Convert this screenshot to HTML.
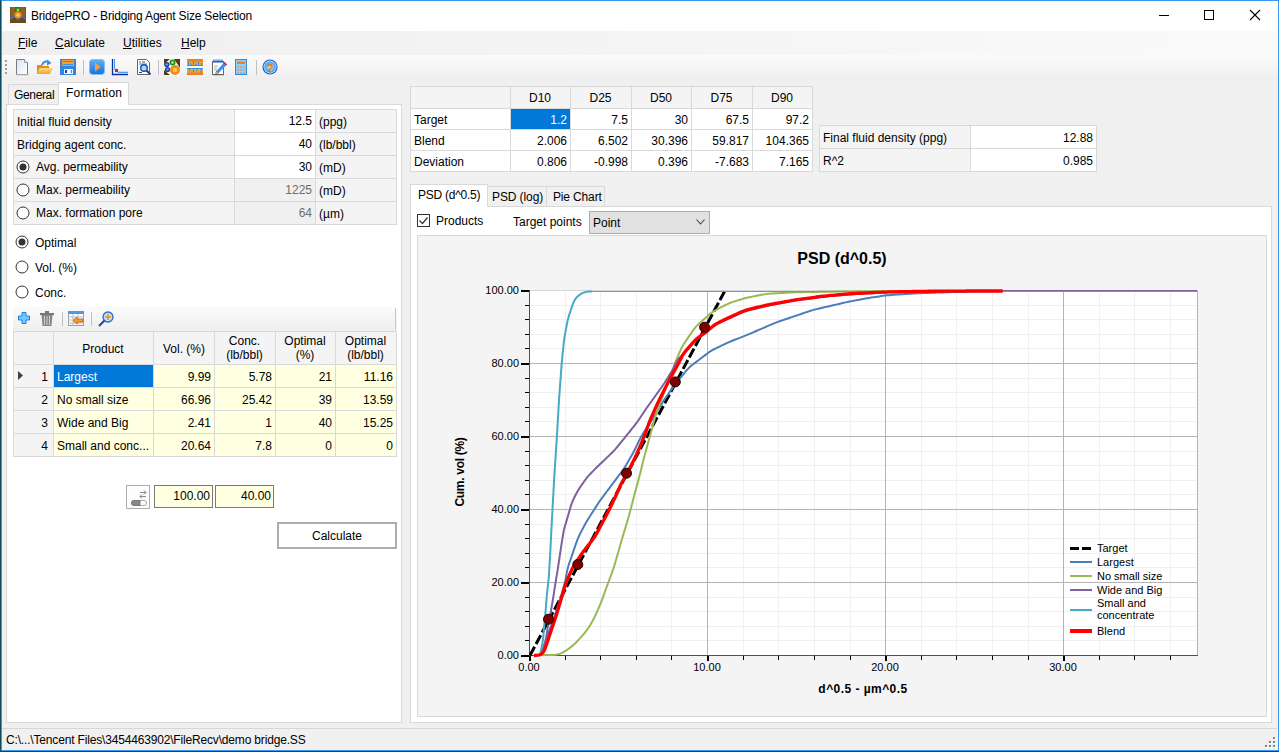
<!DOCTYPE html>
<html><head><meta charset="utf-8">
<style>
*{box-sizing:border-box}
html,body{margin:0;padding:0}
body{width:1279px;height:752px;position:relative;overflow:hidden;background:#f0f0f0;font-family:"Liberation Sans",sans-serif;font-size:12px;color:#000}
.a{position:absolute}
.t{position:absolute;white-space:nowrap;line-height:14px}
u{text-decoration:underline;text-underline-offset:1px}
svg{position:absolute;overflow:visible}
</style></head><body>

<div class="a" style="left:0px;top:0px;width:1279px;height:1px;background:#3d97ee;"></div>
<div class="a" style="left:0px;top:0px;width:1px;height:752px;background:#0c4d5c;"></div>
<div class="a" style="left:1px;top:0px;width:1px;height:751px;background:#3d97ee;"></div>
<div class="a" style="left:1278px;top:0px;width:1px;height:751px;background:#3d97ee;"></div>
<div class="a" style="left:1px;top:750px;width:1278px;height:1px;background:#3d97ee;"></div>
<div class="a" style="left:0px;top:751px;width:1279px;height:1px;background:#0c4d5c;"></div>
<div class="a" style="left:2px;top:1px;width:1276px;height:30px;background:#fff;"></div>
<svg style="left:10px;top:7px" width="16" height="16" viewBox="0 0 16 16">
<rect x="0" y="0" width="16" height="16" fill="#7a5218"/>
<rect x="1" y="0" width="4" height="12" fill="#8d6225"/>
<rect x="11" y="0" width="4" height="12" fill="#8d6225"/>
<path d="M0 11 L5 8 L8 12 L11 8 L16 11 L16 15 L0 15Z" fill="#3d6fd0"/>
<path d="M0 13 L5 10 L8 14 L11 10 L16 13 L16 16 L0 16Z" fill="#6b4a16"/>
<circle cx="8" cy="3" r="2.3" fill="#2e9a3a"/><circle cx="8" cy="3" r="1" fill="#d6e83a"/>
<circle cx="8" cy="8" r="3.6" fill="#f08a1c"/><circle cx="8" cy="8" r="1.8" fill="#ffd040"/>
</svg>
<div class="t" style="left:31px;top:9px;letter-spacing:-0.19px">BridgePRO - Bridging Agent Size Selection</div>
<div class="a" style="left:1159px;top:15px;width:10px;height:1px;background:#000;"></div>
<div class="a" style="left:1204px;top:10px;width:10px;height:10px;border:1px solid #000;"></div>
<svg style="left:1250px;top:10px" width="10" height="10"><path d="M0 0L10 10M10 0L0 10" stroke="#000" stroke-width="1.1"/></svg>
<div class="a" style="left:2px;top:31px;width:1276px;height:24px;background:linear-gradient(to right,#efefef,#fafafa);"></div>
<div class="a" style="left:2px;top:55px;width:1276px;height:25px;background:linear-gradient(#fbfbfb,#eeeeee);"></div>
<div class="t" style="left:18px;top:36px;"><u>F</u>ile</div>
<div class="t" style="left:55px;top:36px;"><u>C</u>alculate</div>
<div class="t" style="left:123px;top:36px;"><u>U</u>tilities</div>
<div class="t" style="left:181px;top:36px;"><u>H</u>elp</div>
<div class="a" style="left:5px;top:60px;width:2px;height:2px;background:#a0a0a0;"></div>
<div class="a" style="left:5px;top:64px;width:2px;height:2px;background:#a0a0a0;"></div>
<div class="a" style="left:5px;top:68px;width:2px;height:2px;background:#a0a0a0;"></div>
<div class="a" style="left:5px;top:72px;width:2px;height:2px;background:#a0a0a0;"></div>
<svg style="left:15px;top:59px" width="14" height="17" viewBox="0 0 14 17">
<defs><linearGradient id="gdoc" x1="0" y1="0" x2="1" y2="1"><stop offset="0" stop-color="#d4e6fa"/><stop offset="1" stop-color="#ffffff"/></linearGradient></defs>
<path d="M1.5 0.5H9.5L12.5 3.5V15.5H1.5Z" fill="url(#gdoc)" stroke="#7a7a7a"/>
<path d="M9.5 0.5V3.5H12.5" fill="#fff" stroke="#9a9a9a"/><path d="M1 16H14" stroke="#d0d0d0"/></svg>
<svg style="left:37px;top:59px" width="16" height="16" viewBox="0 0 16 16">
<defs><linearGradient id="gfo" x1="0" y1="0" x2="0" y2="1"><stop offset="0" stop-color="#ffe080"/><stop offset="1" stop-color="#f0a030"/></linearGradient></defs>
<path d="M0 6H5L6 7H12V15H0Z" fill="#e08a20"/>
<path d="M2.5 9H16L13 15H0Z" fill="url(#gfo)"/>
<path d="M5 6 Q7 1 12 3" stroke="#3a8fe0" stroke-width="2" fill="none"/><path d="M10 0.5L14.5 4L10 6.5Z" fill="#3a8fe0"/></svg>
<svg style="left:60px;top:59px" width="16" height="16" viewBox="0 0 16 16">
<rect x="0" y="0" width="16" height="16" fill="#2f86e0"/>
<rect x="2" y="1" width="12" height="6" fill="#f5a030"/><rect x="3" y="2" width="10" height="1" fill="#3a90e8"/><rect x="3" y="5" width="10" height="1" fill="#3a90e8"/>
<rect x="4" y="10" width="9" height="5" fill="#f0f4fc"/><rect x="5" y="11" width="2" height="3" fill="#2040a0"/><rect x="11" y="11" width="1" height="3" fill="#2f86e0"/></svg>
<div class="a" style="left:83px;top:60px;width:1px;height:15px;background:#c0c0c0;"></div>
<svg style="left:89px;top:59px" width="16" height="16" viewBox="0 0 16 16">
<defs><linearGradient id="gpl" x1="0" y1="0" x2="0" y2="1"><stop offset="0" stop-color="#60b0f8"/><stop offset="1" stop-color="#1a70d8"/></linearGradient></defs>
<rect x="0.5" y="0.5" width="15" height="15" rx="3" fill="url(#gpl)" stroke="#80c0f8"/>
<path d="M6 3.5L11.5 8L6 12.5Z" fill="#f7a030"/></svg>
<svg style="left:112px;top:59px" width="17" height="16" viewBox="0 0 17 16">
<path d="M0.5 0V15.5H16" stroke="#0a30a0" stroke-width="1.3" fill="none"/>
<path d="M2.5 0V8 Q2.5 13 8 13.4H16" stroke="#40a0f8" stroke-width="1.1" fill="none"/>
<rect x="3" y="10" width="3" height="3" fill="#d82010"/></svg>
<svg style="left:137px;top:59px" width="15" height="17" viewBox="0 0 15 17">
<path d="M0.5 0.5H9.5L12.5 3.5V15.5H0.5Z" fill="#fff" stroke="#666"/>
<rect x="2" y="2.5" width="2" height="1" fill="#d03030"/><rect x="5" y="2.5" width="3" height="1" fill="#1a40b0"/>
<rect x="2" y="4.5" width="8" height="1" fill="#3a8ee6"/><rect x="2" y="13" width="3" height="1" fill="#1a40b0"/>
<circle cx="7" cy="9" r="3.3" fill="#a8dcfc" stroke="#1a48b0" stroke-width="1.4"/><path d="M9.5 11.5L13.5 15.5" stroke="#1a3a98" stroke-width="1.8"/></svg>
<div class="a" style="left:158px;top:60px;width:1px;height:15px;background:#c0c0c0;"></div>
<svg style="left:164px;top:59px" width="16" height="16" viewBox="0 0 16 16">
<rect width="16" height="16" fill="#fafafa"/>
<path d="M0 0H6L0 5Z M16 0H10L16 9Z M0 16V11L6 16Z" fill="#5a3a10"/>
<circle cx="8.5" cy="3.5" r="3" fill="#1e9030"/><circle cx="8.5" cy="3.5" r="1.2" fill="#e0f040"/>
<circle cx="2.8" cy="5.5" r="2.6" fill="#1a40a0"/><circle cx="2.8" cy="5.5" r="1.2" fill="#60a0e0"/>
<circle cx="3.5" cy="10.5" r="2.6" fill="#1a40a0"/><circle cx="3.5" cy="10.5" r="1.2" fill="#60a0e0"/>
<circle cx="11" cy="11" r="5" fill="#f58a20"/><circle cx="11" cy="11" r="2.2" fill="#ffd040"/></svg>
<svg style="left:187px;top:59px" width="16" height="16" viewBox="0 0 16 16">
<defs><linearGradient id="gru" x1="0" y1="0" x2="0" y2="1"><stop offset="0" stop-color="#e87818"/><stop offset="0.5" stop-color="#ffd050"/><stop offset="1" stop-color="#e87818"/></linearGradient></defs>
<rect width="16" height="16" fill="url(#gru)"/><rect y="7" width="16" height="2" fill="#fff8e0"/>
<path d="M0 6.5H16M0 9.5H16" stroke="#2a90f0" stroke-width="1"/>
<path d="M1.5 3V6M4 4.5V6M6.5 2V6M9 4.5V6M11.5 3V6M14.5 4V6 M2.5 10V12M6.5 10V13.5M10 10V12M14 10V13.5" stroke="#2a90f0" stroke-width="1.2"/></svg>
<svg style="left:211px;top:59px" width="17" height="17" viewBox="0 0 17 17">
<rect x="1.5" y="2.5" width="11" height="13" fill="#fff" stroke="#666"/><path d="M2 16.5H13" stroke="#ccc"/>
<path d="M3 0.5V4M5 0.5V4M7 0.5V4M9 0.5V4M11 0.5V4" stroke="#1a60d0" stroke-width="1.1"/>
<path d="M3 7H7M3 9H6M3 11H6" stroke="#b0b0b0"/>
<path d="M13.5 3L16 5.5L7.5 14L4.5 15L5.5 12Z" fill="#3a90f0"/><path d="M13.5 3L16 5.5L15 6.5L12.5 4Z" fill="#e02020"/><path d="M5.5 12L7.5 14L4.5 15Z" fill="#f0d090" stroke="#805010" stroke-width="0.5"/></svg>
<svg style="left:235px;top:59px" width="12" height="16" viewBox="0 0 12 16">
<rect x="0" y="0" width="12" height="16" fill="#2a88f0"/><rect x="1" y="1" width="10" height="14" fill="#90d0fa"/>
<rect x="2" y="2.5" width="8" height="2.5" fill="#f28020"/>
<path d="M2 8h2M5 8h2M8 8h2M2 11h2M5 11h2M8 11h2M2 14h2M5 14h2M8 14h2" stroke="#f28a20" stroke-width="1.2"/></svg>
<div class="a" style="left:256px;top:60px;width:1px;height:15px;background:#c0c0c0;"></div>
<svg style="left:262px;top:59px" width="16" height="16" viewBox="0 0 16 16">
<defs><radialGradient id="ghl" cx="0.5" cy="0.5" r="0.5"><stop offset="0" stop-color="#d8f0ff"/><stop offset="1" stop-color="#3a9af0"/></radialGradient></defs>
<circle cx="8" cy="8" r="7.6" fill="#1a58c8"/><circle cx="8" cy="8" r="6.5" fill="#bfe4fc"/><circle cx="8" cy="8" r="5.6" fill="url(#ghl)"/>
<text x="8" y="12.8" font-family="Liberation Sans" font-weight="bold" font-size="11" fill="#f8a020" stroke="#e04000" stroke-width="0.3" text-anchor="middle">?</text></svg>
<div class="a" style="left:6px;top:104px;width:396px;height:619px;background:#fff;border:1px solid #d9d9d9;"></div>
<div class="a" style="left:8px;top:84px;width:51px;height:21px;background:#f0f0f0;border:1px solid #d9d9d9;"></div>
<div class="a" style="left:58px;top:82px;width:71px;height:23px;background:#fff;border:1px solid #d9d9d9;border-bottom:none"></div>
<div class="t" style="left:14px;top:88px;letter-spacing:-0.35px">General</div>
<div class="t" style="left:66px;top:86px;letter-spacing:0.25px">Formation</div>
<div class="a" style="left:13px;top:109px;width:384px;height:116px;background:#f4f4f4;border:1px solid #d9d9d9;"></div>
<div class="a" style="left:234px;top:109px;width:82px;height:24px;background:#fff;border:1px solid #d9d9d9;"></div>
<div class="a" style="left:13px;top:109px;width:384px;height:1px;background:#d9d9d9;"></div>
<div class="a" style="left:234px;top:132px;width:82px;height:24px;background:#fff;border:1px solid #d9d9d9;"></div>
<div class="a" style="left:13px;top:132px;width:384px;height:1px;background:#d9d9d9;"></div>
<div class="a" style="left:234px;top:155px;width:82px;height:24px;background:#fff;border:1px solid #d9d9d9;"></div>
<div class="a" style="left:13px;top:155px;width:384px;height:1px;background:#d9d9d9;"></div>
<div class="a" style="left:234px;top:178px;width:82px;height:24px;background:#f0f0f0;border:1px solid #d9d9d9;"></div>
<div class="a" style="left:13px;top:178px;width:384px;height:1px;background:#d9d9d9;"></div>
<div class="a" style="left:234px;top:201px;width:82px;height:24px;background:#f0f0f0;border:1px solid #d9d9d9;"></div>
<div class="a" style="left:13px;top:201px;width:384px;height:1px;background:#d9d9d9;"></div>
<div class="a" style="left:315px;top:109px;width:1px;height:116px;background:#d9d9d9;"></div>
<div class="t" style="left:17px;top:115px;">Initial fluid density</div>
<div class="t" style="right:967px;top:114px;color:#000">12.5</div>
<div class="t" style="left:319px;top:115px;">(ppg)</div>
<div class="t" style="left:17px;top:138px;">Bridging agent conc.</div>
<div class="t" style="right:967px;top:137px;color:#000">40</div>
<div class="t" style="left:319px;top:138px;">(lb/bbl)</div>
<svg style="left:16px;top:159.5px" width="14" height="14"><circle cx="7" cy="7" r="6" fill="#fff" stroke="#333" stroke-width="1"/><circle cx="7" cy="7" r="3.5" fill="#333"/></svg>
<div class="t" style="left:36px;top:160px;">Avg. permeability</div>
<div class="t" style="right:967px;top:160px;color:#000">30</div>
<div class="t" style="left:319px;top:161px;">(mD)</div>
<svg style="left:16px;top:182.5px" width="14" height="14"><circle cx="7" cy="7" r="6" fill="#fff" stroke="#333" stroke-width="1"/></svg>
<div class="t" style="left:36px;top:183px;">Max. permeability</div>
<div class="t" style="right:967px;top:183px;color:#6d6d6d">1225</div>
<div class="t" style="left:319px;top:184px;">(mD)</div>
<svg style="left:16px;top:205.5px" width="14" height="14"><circle cx="7" cy="7" r="6" fill="#fff" stroke="#333" stroke-width="1"/></svg>
<div class="t" style="left:36px;top:206px;">Max. formation pore</div>
<div class="t" style="right:967px;top:206px;color:#6d6d6d">64</div>
<div class="t" style="left:319px;top:207px;">(&micro;m)</div>
<svg style="left:15px;top:235.0px" width="14" height="14"><circle cx="7" cy="7" r="6" fill="#fff" stroke="#333" stroke-width="1"/><circle cx="7" cy="7" r="3.5" fill="#333"/></svg>
<div class="t" style="left:35px;top:236px;">Optimal</div>
<svg style="left:15px;top:260.0px" width="14" height="14"><circle cx="7" cy="7" r="6" fill="#fff" stroke="#333" stroke-width="1"/></svg>
<div class="t" style="left:35px;top:261px;">Vol. (%)</div>
<svg style="left:15px;top:285.0px" width="14" height="14"><circle cx="7" cy="7" r="6" fill="#fff" stroke="#333" stroke-width="1"/></svg>
<div class="t" style="left:35px;top:286px;">Conc.</div>
<div class="a" style="left:13px;top:306px;width:384px;height:25px;background:linear-gradient(#fbfbfb,#efefef);border-radius:3px 0 0 0"></div>
<div class="a" style="left:395px;top:308px;width:1px;height:22px;background:#c8c8c8;"></div>
<svg style="left:18px;top:312px" width="12" height="12" viewBox="0 0 12 12">
<path d="M4 0.5H8V4H11.5V8H8V11.5H4V8H0.5V4H4Z" fill="#70c8ff" stroke="#1a80e8" stroke-width="1"/></svg>
<svg style="left:40px;top:311px" width="14" height="15" viewBox="0 0 14 15">
<rect x="0" y="2" width="14" height="2" fill="#777"/><rect x="5" y="0" width="4" height="2" fill="#777"/>
<path d="M1.5 4H12.5L11.5 15H2.5Z" fill="#888"/><path d="M4.5 5V14M7 5V14M9.5 5V14" stroke="#ccc"/></svg>
<div class="a" style="left:62px;top:312px;width:1px;height:14px;background:#c0c0c0;"></div>
<svg style="left:68px;top:311px" width="16" height="15" viewBox="0 0 16 15">
<rect x="0.5" y="0.5" width="15" height="14" fill="#fff" stroke="#999"/>
<rect x="0" y="0" width="16" height="3" fill="#4a9ae8"/>
<path d="M0 6H16M0 9H16M0 12H16M5 3V15M10 3V15" stroke="#bbb"/>
<path d="M15 8H9V6L5 9.5L9 13V11H15Z" fill="#f0a020" stroke="#d04010" stroke-width="0.7"/></svg>
<div class="a" style="left:91px;top:312px;width:1px;height:14px;background:#c0c0c0;"></div>
<svg style="left:98px;top:311px" width="16" height="16" viewBox="0 0 16 16">
<circle cx="10" cy="6" r="5" fill="#bfe0fb" stroke="#2a6ac8" stroke-width="1.3"/>
<path d="M10 3V9M7 6H13" stroke="#f09020" stroke-width="1.6"/>
<path d="M6.5 9.5L1 15" stroke="#2a4a98" stroke-width="2.2"/></svg>
<div class="a" style="left:13px;top:331px;width:384px;height:126px;background:#fff;border:1px solid #d9d9d9;"></div>
<div class="a" style="left:14px;top:332px;width:382px;height:32px;background:#f4f4f4;"></div>
<div class="a" style="left:14px;top:364px;width:39px;height:92px;background:#f4f4f4;"></div>
<div class="a" style="left:54px;top:365px;width:342px;height:91px;background:#ffffe1;"></div>
<div class="a" style="left:53px;top:331px;width:1px;height:126px;background:#d9d9d9;"></div>
<div class="a" style="left:153px;top:331px;width:1px;height:126px;background:#d9d9d9;"></div>
<div class="a" style="left:214px;top:331px;width:1px;height:126px;background:#d9d9d9;"></div>
<div class="a" style="left:275px;top:331px;width:1px;height:126px;background:#d9d9d9;"></div>
<div class="a" style="left:335px;top:331px;width:1px;height:126px;background:#d9d9d9;"></div>
<div class="a" style="left:13px;top:364px;width:384px;height:1px;background:#d9d9d9;"></div>
<div class="a" style="left:13px;top:387px;width:384px;height:1px;background:#d9d9d9;"></div>
<div class="a" style="left:13px;top:410px;width:384px;height:1px;background:#d9d9d9;"></div>
<div class="a" style="left:13px;top:433px;width:384px;height:1px;background:#d9d9d9;"></div>
<div class="a" style="left:54px;top:365px;width:99px;height:22px;background:#0078d7;"></div>
<div class="t" style="left:3.0px;width:200px;text-align:center;top:342px;">Product</div>
<div class="t" style="left:84.0px;width:200px;text-align:center;top:342px;">Vol. (%)</div>
<div class="t" style="left:214px;width:61px;top:334px;text-align:center;line-height:14px">Conc.<br>(lb/bbl)</div>
<div class="t" style="left:275px;width:60px;top:334px;text-align:center;line-height:14px">Optimal<br>(%)</div>
<div class="t" style="left:335px;width:61px;top:334px;text-align:center;line-height:14px">Optimal<br>(lb/bbl)</div>
<svg style="left:18px;top:371px" width="5" height="9"><path d="M0 0L5 4.5L0 9Z" fill="#404040"/></svg>
<div class="t" style="right:1231px;top:370px;">1</div>
<div class="t" style="left:57px;top:370px;color:#fff">Largest</div>
<div class="t" style="right:1068px;top:370px;">9.99</div>
<div class="t" style="right:1007px;top:370px;">5.78</div>
<div class="t" style="right:947px;top:370px;">21</div>
<div class="t" style="right:886px;top:370px;">11.16</div>
<div class="t" style="right:1231px;top:393px;">2</div>
<div class="t" style="left:57px;top:393px;">No small size</div>
<div class="t" style="right:1068px;top:393px;">66.96</div>
<div class="t" style="right:1007px;top:393px;">25.42</div>
<div class="t" style="right:947px;top:393px;">39</div>
<div class="t" style="right:886px;top:393px;">13.59</div>
<div class="t" style="right:1231px;top:416px;">3</div>
<div class="t" style="left:57px;top:416px;">Wide and Big</div>
<div class="t" style="right:1068px;top:416px;">2.41</div>
<div class="t" style="right:1007px;top:416px;">1</div>
<div class="t" style="right:947px;top:416px;">40</div>
<div class="t" style="right:886px;top:416px;">15.25</div>
<div class="t" style="right:1231px;top:439px;">4</div>
<div class="t" style="left:57px;top:439px;">Small and conc...</div>
<div class="t" style="right:1068px;top:439px;">20.64</div>
<div class="t" style="right:1007px;top:439px;">7.8</div>
<div class="t" style="right:947px;top:439px;">0</div>
<div class="t" style="right:886px;top:439px;">0</div>
<div class="a" style="left:126px;top:485px;width:24px;height:24px;background:#fdfdfd;border:1px solid #adadad;"></div>
<svg style="left:126px;top:485px" width="24" height="24" viewBox="0 0 24 24">
<path d="M14 7.5H20M18 5.5L20 7.5L18 9.5M20 11.5H14M16 9.5L14 11.5L16 13.5" stroke="#888" stroke-width="1" fill="none"/>
<rect x="5.5" y="15.5" width="15" height="5" rx="2.5" fill="#fff" stroke="#aaa"/><path d="M8 15.5H14V20.5H8A2.5 2.5 0 0 1 8 15.5Z" fill="#8a8a8a" stroke="#777"/></svg>
<div class="a" style="left:154px;top:485px;width:59px;height:23px;background:#ffffe1;border:1px solid #7a7a7a;"></div>
<div class="a" style="left:215px;top:485px;width:59px;height:23px;background:#ffffe1;border:1px solid #7a7a7a;"></div>
<div class="t" style="right:1069px;top:489px;">100.00</div>
<div class="t" style="right:1008px;top:489px;">40.00</div>
<div class="a" style="left:277px;top:522px;width:120px;height:27px;background:#fff;border:2px solid #adadad;"></div>
<div class="t" style="left:237.0px;width:200px;text-align:center;top:529px;">Calculate</div>
<div class="a" style="left:410px;top:86px;width:403px;height:86px;background:#fff;border:1px solid #d9d9d9;"></div>
<div class="a" style="left:411px;top:87px;width:401px;height:21px;background:#f4f4f4;"></div>
<div class="a" style="left:510px;top:86px;width:1px;height:86px;background:#d9d9d9;"></div>
<div class="a" style="left:570px;top:86px;width:1px;height:86px;background:#d9d9d9;"></div>
<div class="a" style="left:631px;top:86px;width:1px;height:86px;background:#d9d9d9;"></div>
<div class="a" style="left:691px;top:86px;width:1px;height:86px;background:#d9d9d9;"></div>
<div class="a" style="left:752px;top:86px;width:1px;height:86px;background:#d9d9d9;"></div>
<div class="a" style="left:410px;top:108px;width:403px;height:1px;background:#d9d9d9;"></div>
<div class="a" style="left:410px;top:129px;width:403px;height:1px;background:#d9d9d9;"></div>
<div class="a" style="left:410px;top:150px;width:403px;height:1px;background:#d9d9d9;"></div>
<div class="a" style="left:511px;top:109px;width:59px;height:20px;background:#0078d7;"></div>
<div class="t" style="left:440.0px;width:200px;text-align:center;top:91px;">D10</div>
<div class="t" style="left:500.5px;width:200px;text-align:center;top:91px;">D25</div>
<div class="t" style="left:561.0px;width:200px;text-align:center;top:91px;">D50</div>
<div class="t" style="left:621.5px;width:200px;text-align:center;top:91px;">D75</div>
<div class="t" style="left:682.0px;width:200px;text-align:center;top:91px;">D90</div>
<div class="t" style="left:414px;top:113px;">Target</div>
<div class="t" style="right:712px;top:113px;color:#fff">1.2</div>
<div class="t" style="right:651px;top:113px;">7.5</div>
<div class="t" style="right:591px;top:113px;">30</div>
<div class="t" style="right:530px;top:113px;">67.5</div>
<div class="t" style="right:470px;top:113px;">97.2</div>
<div class="t" style="left:414px;top:134px;">Blend</div>
<div class="t" style="right:712px;top:134px;">2.006</div>
<div class="t" style="right:651px;top:134px;">6.502</div>
<div class="t" style="right:591px;top:134px;">30.396</div>
<div class="t" style="right:530px;top:134px;">59.817</div>
<div class="t" style="right:470px;top:134px;">104.365</div>
<div class="t" style="left:414px;top:155px;">Deviation</div>
<div class="t" style="right:712px;top:155px;">0.806</div>
<div class="t" style="right:651px;top:155px;">-0.998</div>
<div class="t" style="right:591px;top:155px;">0.396</div>
<div class="t" style="right:530px;top:155px;">-7.683</div>
<div class="t" style="right:470px;top:155px;">7.165</div>
<div class="a" style="left:819px;top:125px;width:278px;height:47px;background:#fff;border:1px solid #d9d9d9;"></div>
<div class="a" style="left:820px;top:126px;width:150px;height:45px;background:#f4f4f4;"></div>
<div class="a" style="left:970px;top:125px;width:1px;height:47px;background:#d9d9d9;"></div>
<div class="a" style="left:819px;top:148px;width:278px;height:1px;background:#d9d9d9;"></div>
<div class="t" style="left:823px;top:131px;">Final fluid density (ppg)</div>
<div class="t" style="left:823px;top:154px;">R^2</div>
<div class="t" style="right:186px;top:131px;">12.88</div>
<div class="t" style="right:186px;top:154px;">0.985</div>
<div class="a" style="left:410px;top:206px;width:862px;height:517px;background:#fff;border:1px solid #d9d9d9;"></div>
<div class="a" style="left:487px;top:186px;width:60px;height:21px;background:#f0f0f0;border:1px solid #d9d9d9;"></div>
<div class="a" style="left:546px;top:186px;width:59px;height:21px;background:#f0f0f0;border:1px solid #d9d9d9;"></div>
<div class="a" style="left:410px;top:184px;width:78px;height:23px;background:#fff;border:1px solid #d9d9d9;border-bottom:none"></div>
<div class="t" style="left:418px;top:188px;letter-spacing:-0.25px">PSD (d^0.5)</div>
<div class="t" style="left:492px;top:190px;letter-spacing:-0.1px">PSD (log)</div>
<div class="t" style="left:553px;top:190px;letter-spacing:-0.15px">Pie Chart</div>
<div class="a" style="left:417px;top:214px;width:13px;height:13px;background:#fff;border:1px solid #333;"></div>
<svg style="left:417px;top:214px" width="13" height="13"><path d="M2.5 6.5L5.5 9.5L10.5 3.5" stroke="#333" stroke-width="1.2" fill="none"/></svg>
<div class="t" style="left:436px;top:214px;">Products</div>
<div class="t" style="left:513px;top:215px;">Target points</div>
<div class="a" style="left:589px;top:211px;width:121px;height:23px;background:#e1e1e1;border:1px solid #adadad;"></div>
<div class="t" style="left:593px;top:216px;">Point</div>
<svg style="left:696px;top:219px" width="10" height="7"><path d="M0.5 0.5L4.5 5L8.5 0.5" stroke="#444" stroke-width="1.1" fill="none"/></svg>
<div class="a" style="left:417px;top:235px;width:850px;height:482px;background:#f4f4f4;border:1px solid #d9d9d9;"></div>
<div class="a" style="left:2px;top:728px;width:1275px;height:1px;background:#d7d7d7;"></div>
<div class="t" style="left:6px;top:733px;letter-spacing:-0.17px">C:\...\Tencent Files\3454463902\FileRecv\demo bridge.SS</div>
<div class="a" style="left:1274px;top:738px;width:2px;height:2px;background:#fff;"></div>
<div class="a" style="left:1273px;top:737px;width:2px;height:2px;background:#808080;"></div>
<div class="a" style="left:1270px;top:742px;width:2px;height:2px;background:#fff;"></div>
<div class="a" style="left:1269px;top:741px;width:2px;height:2px;background:#808080;"></div>
<div class="a" style="left:1274px;top:742px;width:2px;height:2px;background:#fff;"></div>
<div class="a" style="left:1273px;top:741px;width:2px;height:2px;background:#808080;"></div>
<div class="a" style="left:1266px;top:746px;width:2px;height:2px;background:#fff;"></div>
<div class="a" style="left:1265px;top:745px;width:2px;height:2px;background:#808080;"></div>
<div class="a" style="left:1270px;top:746px;width:2px;height:2px;background:#fff;"></div>
<div class="a" style="left:1269px;top:745px;width:2px;height:2px;background:#808080;"></div>
<div class="a" style="left:1274px;top:746px;width:2px;height:2px;background:#fff;"></div>
<div class="a" style="left:1273px;top:745px;width:2px;height:2px;background:#808080;"></div>
<svg style="left:0;top:0" width="1279" height="752" viewBox="0 0 1279 752">
<rect x="529" y="290" width="668" height="365" fill="#fff"/>
<path d="M565.5 290V655M600.5 290V655M636.5 290V655M671.5 290V655M743.5 290V655M778.5 290V655M814.5 290V655M850.5 290V655M921.5 290V655M956.5 290V655M992.5 290V655M1028.5 290V655M1099.5 290V655M1134.5 290V655M1170.5 290V655M529 640.5H1197M529 626.5H1197M529 611.5H1197M529 597.5H1197M529 567.5H1197M529 553.5H1197M529 538.5H1197M529 524.5H1197M529 494.5H1197M529 480.5H1197M529 465.5H1197M529 451.5H1197M529 421.5H1197M529 407.5H1197M529 392.5H1197M529 378.5H1197M529 348.5H1197M529 334.5H1197M529 319.5H1197M529 305.5H1197" stroke="#f0f0f0" stroke-width="1"/>
<path d="M707.5 290V655M885.5 290V655M1063.5 290V655M529 582.5H1197M529 509.5H1197M529 436.5H1197M529 363.5H1197" stroke="#b4b4b4" stroke-width="1"/>
<path d="M529 290.5H1197" stroke="#d8d8d8" stroke-width="1"/>
<path d="M1197.5 290V655" stroke="#b4b4b4" stroke-width="1"/>
<path d="M529.5 290V656M529 655.5H1198" stroke="#505050" stroke-width="1"/>
<path d="M525 640.5H529M525 626.5H529M525 611.5H529M525 597.5H529M525 567.5H529M525 553.5H529M525 538.5H529M525 524.5H529M525 494.5H529M525 480.5H529M525 465.5H529M525 451.5H529M525 421.5H529M525 407.5H529M525 392.5H529M525 378.5H529M525 348.5H529M525 334.5H529M525 319.5H529M525 305.5H529M565.5 656V660M600.5 656V660M636.5 656V660M671.5 656V660M743.5 656V660M778.5 656V660M814.5 656V660M850.5 656V660M921.5 656V660M956.5 656V660M992.5 656V660M1028.5 656V660M1099.5 656V660M1134.5 656V660M1170.5 656V660" stroke="#000" stroke-width="1"/>
<path d="M521 656H529M521 583H529M521 510H529M521 437H529M521 364H529M521 291H529M530 656V661M708 656V661M886 656V661M1064 656V661" stroke="#000" stroke-width="2"/>
<clipPath id="plotclip"><rect x="529" y="289.5" width="669" height="367"/></clipPath>
<path d="M529.9 655.5 L725.3 290" stroke="#000" stroke-width="3" stroke-dasharray="10 3" fill="none" clip-path="url(#plotclip)"/>
<path d="M541.00 655.00 L541.63 653.10 L542.27 651.20 L542.90 649.31 L543.53 647.41 L544.16 645.51 L544.80 643.62 L545.44 641.72 L546.09 639.83 L546.74 637.94 L547.41 636.05 L548.08 634.17 L548.76 632.29 L549.43 630.40 L550.10 628.52 L550.77 626.63 L551.45 624.75 L552.12 622.87 L552.79 620.98 L553.46 619.10 L554.14 617.22 L554.81 615.33 L555.48 613.45 L556.14 611.56 L556.80 609.67 L557.46 607.78 L558.11 605.89 L558.76 604.00 L559.41 602.11 L560.02 600.21 L560.60 598.29 L561.13 596.37 L561.64 594.43 L562.13 592.49 L562.62 590.55 L563.14 588.62 L563.68 586.70 L564.23 584.78 L564.76 582.85 L565.22 580.91 L565.63 578.96 L566.00 577.00 L566.36 575.03 L566.72 573.06 L567.10 571.10 L567.53 569.15 L568.03 567.22 L568.60 565.31 L569.23 563.41 L569.87 561.52 L570.52 559.63 L571.17 557.73 L571.82 555.84 L572.47 553.95 L573.12 552.06 L573.77 550.17 L574.42 548.27 L575.07 546.38 L575.72 544.49 L576.37 542.60 L577.05 540.72 L577.78 538.86 L578.57 537.03 L579.42 535.22 L580.30 533.43 L581.20 531.64 L582.12 529.87 L583.06 528.10 L584.02 526.34 L584.98 524.59 L585.95 522.84 L586.94 521.11 L587.96 519.39 L589.01 517.69 L590.08 516.00 L591.16 514.31 L592.25 512.63 L593.33 510.95 L594.41 509.27 L595.50 507.59 L596.58 505.91 L597.67 504.23 L598.77 502.56 L599.89 500.91 L601.05 499.27 L602.22 497.66 L603.42 496.05 L604.62 494.45 L605.82 492.85 L607.02 491.26 L608.22 489.66 L609.43 488.06 L610.63 486.46 L611.83 484.86 L613.03 483.26 L614.22 481.66 L615.42 480.05 L616.62 478.45 L617.82 476.85 L619.01 475.24 L620.21 473.64 L621.40 472.04 L622.58 470.42 L623.72 468.78 L624.81 467.11 L625.86 465.41 L626.88 463.69 L627.89 461.96 L628.90 460.24 L629.91 458.51 L630.91 456.78 L631.91 455.04 L632.88 453.30 L633.81 451.53 L634.72 449.75 L635.60 447.95 L636.47 446.15 L637.35 444.35 L638.22 442.55 L639.10 440.76 L639.99 438.97 L640.92 437.20 L641.90 435.46 L642.93 433.75 L644.01 432.07 L645.11 430.40 L646.21 428.73 L647.32 427.06 L648.42 425.40 L649.52 423.72 L650.61 422.05 L651.68 420.36 L652.72 418.65 L653.75 416.94 L654.77 415.22 L655.79 413.49 L656.80 411.77 L657.82 410.04 L658.83 408.32 L659.85 406.60 L660.88 404.89 L661.94 403.19 L663.03 401.52 L664.15 399.86 L665.30 398.22 L666.45 396.59 L667.61 394.96 L668.76 393.32 L669.92 391.69 L671.07 390.06 L672.23 388.43 L673.40 386.80 L674.58 385.19 L675.80 383.60 L677.04 382.04 L678.29 380.48 L679.56 378.93 L680.83 377.38 L682.09 375.84 L683.36 374.29 L684.63 372.74 L685.90 371.20 L687.20 369.69 L688.56 368.23 L689.99 366.86 L691.50 365.56 L693.07 364.32 L694.65 363.10 L696.24 361.89 L697.84 360.68 L699.43 359.47 L701.02 358.26 L702.61 357.05 L704.20 355.84 L705.80 354.63 L707.40 353.44 L709.02 352.28 L710.69 351.18 L712.41 350.18 L714.17 349.24 L715.96 348.35 L717.75 347.47 L719.55 346.60 L721.35 345.72 L723.15 344.85 L724.95 343.98 L726.76 343.12 L728.58 342.29 L730.41 341.50 L732.26 340.75 L734.12 340.01 L735.99 339.29 L737.85 338.56 L739.72 337.84 L741.58 337.11 L743.45 336.39 L745.31 335.66 L747.16 334.91 L749.01 334.15 L750.85 333.37 L752.69 332.58 L754.52 331.78 L756.36 330.98 L758.19 330.19 L760.03 329.39 L761.86 328.59 L763.70 327.80 L765.53 327.00 L767.37 326.20 L769.20 325.41 L771.04 324.61 L772.88 323.83 L774.73 323.07 L776.59 322.34 L778.47 321.66 L780.35 321.00 L782.25 320.35 L784.14 319.71 L786.04 319.07 L787.93 318.43 L789.83 317.78 L791.72 317.14 L793.61 316.50 L795.51 315.86 L797.40 315.22 L799.30 314.58 L801.19 313.93 L803.09 313.29 L804.98 312.65 L806.88 312.01 L808.77 311.37 L810.67 310.75 L812.58 310.16 L814.50 309.62 L816.44 309.12 L818.38 308.66 L820.33 308.20 L822.28 307.75 L824.23 307.31 L826.18 306.86 L828.13 306.41 L830.08 305.96 L832.03 305.51 L833.98 305.06 L835.93 304.61 L837.88 304.16 L839.82 303.71 L841.77 303.26 L843.72 302.82 L845.67 302.37 L847.63 301.94 L849.58 301.53 L851.55 301.14 L853.51 300.76 L855.48 300.39 L857.44 300.03 L859.41 299.66 L861.37 299.30 L863.34 298.93 L865.31 298.58 L867.28 298.23 L869.25 297.90 L871.23 297.59 L873.21 297.29 L875.18 296.99 L877.16 296.70 L879.14 296.40 L881.12 296.11 L883.10 295.82 L885.08 295.56 L887.07 295.34 L889.06 295.15 L891.05 295.00 L893.05 294.86 L895.04 294.72 L897.04 294.59 L899.03 294.46 L901.03 294.32 L903.02 294.19 L905.02 294.05 L907.02 293.92 L909.01 293.78 L911.01 293.65 L913.00 293.53 L915.00 293.42 L917.00 293.33 L919.00 293.25 L921.00 293.18 L923.00 293.10 L924.99 293.03 L926.99 292.96 L928.99 292.89 L930.99 292.82 L932.99 292.75 L934.99 292.68 L936.99 292.61 L938.99 292.54 L940.99 292.46 L942.99 292.39 L944.98 292.32 L946.98 292.24 L948.98 292.17 L950.98 292.10 L952.98 292.02 L954.98 291.95 L956.98 291.87 L958.98 291.80 L960.98 291.74 L962.97 291.68 L964.97 291.63 L966.97 291.59 L968.97 291.54 L970.97 291.50 L972.97 291.46 L974.97 291.41 L976.97 291.37 L978.97 291.33 L980.97 291.29 L982.97 291.25 L984.97 291.21 L986.97 291.19 L988.97 291.16 L990.97 291.14 L992.97 291.12 L994.97 291.10 L996.97 291.08 L998.97 291.06 L1000.97 291.04 L1002.97 291.02 L1004.97 291.01 L1006.97 291.00 L1008.97 291.00 L1010.98 291.00 L1012.98 291.00 L1014.98 291.00 L1016.98 291.00 L1018.98 291.00 L1020.98 291.00 L1022.98 291.00 L1024.98 291.00 L1026.98 291.00 L1028.98 291.00 L1030.98 291.00 L1032.98 291.00 L1034.98 291.00 L1036.98 291.00 L1038.98 291.00 L1040.98 291.00 L1042.98 291.00 L1044.98 291.00 L1046.98 291.00 L1048.98 291.00 L1050.98 291.00 L1052.98 291.00 L1054.98 291.00 L1056.98 291.00 L1058.98 291.00 L1060.98 291.00 L1062.98 291.00 L1064.98 291.00 L1066.98 291.00 L1068.98 291.00 L1070.98 291.00 L1072.98 291.00 L1074.98 291.00 L1076.98 291.00 L1078.98 291.00 L1080.98 291.00 L1082.98 291.00 L1084.98 291.00 L1086.99 291.00 L1088.99 291.00 L1090.99 291.00 L1092.99 291.00 L1094.99 291.00 L1096.99 291.00 L1098.99 291.00 L1100.99 291.00 L1102.99 291.00 L1104.99 291.00 L1106.99 291.00 L1108.99 291.00 L1110.99 291.00 L1112.99 291.00 L1114.99 291.00 L1116.99 291.00 L1118.99 291.00 L1120.99 291.00 L1122.99 291.00 L1124.99 291.00 L1126.99 291.00 L1128.99 291.00 L1130.99 291.00 L1132.99 291.00 L1134.99 291.00 L1136.99 291.00 L1138.99 291.00 L1140.99 291.00 L1142.99 291.00 L1144.99 291.00 L1146.99 291.00 L1148.99 291.00 L1150.99 291.00 L1152.99 291.00 L1154.99 291.00 L1156.99 291.00 L1158.99 291.00 L1161.00 291.00 L1163.00 291.00 L1165.00 291.00 L1167.00 291.00 L1169.00 291.00 L1171.00 291.00 L1173.00 291.00 L1175.00 291.00 L1177.00 291.00 L1179.00 291.00 L1181.00 291.00 L1183.00 291.00 L1185.00 291.00 L1187.00 291.00 L1189.00 291.00 L1191.00 291.00 L1193.00 291.00 L1195.00 291.00 L1197.00 291.00 L1197.00 291.00" stroke="#4a7ebb" stroke-width="2" fill="none" stroke-linejoin="round"/>
<path d="M541.00 655.00 L543.00 655.00 L545.00 655.00 L547.00 655.00 L549.00 654.99 L551.00 654.96 L553.00 654.89 L554.99 654.76 L556.95 654.52 L558.85 654.10 L560.70 653.45 L562.49 652.62 L564.23 651.67 L565.94 650.64 L567.59 649.53 L569.21 648.35 L570.79 647.13 L572.34 645.87 L573.85 644.57 L575.31 643.21 L576.72 641.79 L578.11 640.35 L579.48 638.90 L580.83 637.42 L582.16 635.93 L583.45 634.40 L584.71 632.85 L585.94 631.27 L587.14 629.68 L588.30 628.05 L589.40 626.39 L590.44 624.68 L591.43 622.94 L592.39 621.19 L593.34 619.43 L594.26 617.66 L595.15 615.86 L596.00 614.05 L596.82 612.23 L597.64 610.41 L598.44 608.57 L599.23 606.74 L600.00 604.89 L600.75 603.03 L601.49 601.17 L602.22 599.31 L602.92 597.44 L603.60 595.56 L604.26 593.67 L604.92 591.78 L605.58 589.89 L606.27 588.01 L606.96 586.14 L607.67 584.26 L608.37 582.39 L609.07 580.52 L609.77 578.64 L610.46 576.76 L611.16 574.89 L611.85 573.01 L612.53 571.13 L613.19 569.24 L613.82 567.34 L614.41 565.43 L614.98 563.51 L615.54 561.59 L616.09 559.67 L616.64 557.75 L617.20 555.83 L617.75 553.90 L618.30 551.98 L618.84 550.05 L619.39 548.13 L619.93 546.20 L620.47 544.28 L621.02 542.35 L621.57 540.43 L622.12 538.50 L622.69 536.59 L623.27 534.67 L623.85 532.76 L624.44 530.84 L625.02 528.93 L625.60 527.01 L626.18 525.10 L626.75 523.18 L627.31 521.26 L627.87 519.34 L628.43 517.42 L628.98 515.49 L629.53 513.57 L630.06 511.64 L630.57 509.71 L631.07 507.77 L631.57 505.83 L632.06 503.89 L632.56 501.95 L633.05 500.01 L633.55 498.08 L634.05 496.14 L634.56 494.20 L635.08 492.27 L635.60 490.34 L636.12 488.41 L636.65 486.48 L637.18 484.55 L637.70 482.62 L638.23 480.69 L638.75 478.76 L639.26 476.82 L639.76 474.88 L640.25 472.94 L640.74 471.00 L641.22 469.06 L641.70 467.12 L642.18 465.18 L642.66 463.23 L643.14 461.29 L643.63 459.35 L644.12 457.41 L644.63 455.48 L645.14 453.54 L645.67 451.61 L646.21 449.69 L646.74 447.76 L647.28 445.83 L647.81 443.90 L648.34 441.97 L648.88 440.04 L649.41 438.12 L649.94 436.19 L650.46 434.25 L650.99 432.32 L651.51 430.39 L652.03 428.46 L652.54 426.53 L653.06 424.59 L653.59 422.66 L654.13 420.74 L654.70 418.82 L655.30 416.92 L655.94 415.02 L656.60 413.13 L657.27 411.24 L657.93 409.36 L658.60 407.47 L659.27 405.58 L659.94 403.70 L660.62 401.82 L661.31 399.94 L662.03 398.07 L662.75 396.21 L663.48 394.34 L664.21 392.48 L664.94 390.62 L665.67 388.76 L666.40 386.89 L667.13 385.03 L667.85 383.16 L668.56 381.29 L669.25 379.41 L669.93 377.53 L670.60 375.65 L671.27 373.76 L671.93 371.87 L672.60 369.99 L673.27 368.10 L673.95 366.22 L674.64 364.34 L675.36 362.48 L676.11 360.62 L676.87 358.77 L677.65 356.93 L678.42 355.08 L679.20 353.24 L679.99 351.40 L680.79 349.57 L681.65 347.77 L682.60 346.02 L683.63 344.32 L684.72 342.64 L685.84 340.99 L686.96 339.33 L688.09 337.68 L689.22 336.03 L690.35 334.38 L691.48 332.72 L692.61 331.08 L693.77 329.45 L694.97 327.86 L696.25 326.34 L697.63 324.92 L699.09 323.55 L700.58 322.22 L702.08 320.90 L703.58 319.58 L705.09 318.26 L706.59 316.94 L708.10 315.63 L709.62 314.32 L711.16 313.06 L712.76 311.88 L714.43 310.81 L716.16 309.82 L717.92 308.88 L719.70 307.97 L721.48 307.05 L723.26 306.14 L725.05 305.24 L726.84 304.37 L728.66 303.55 L730.52 302.81 L732.40 302.15 L734.30 301.52 L736.20 300.91 L738.11 300.30 L740.02 299.69 L741.93 299.10 L743.85 298.55 L745.78 298.04 L747.72 297.59 L749.68 297.17 L751.64 296.77 L753.60 296.38 L755.56 295.99 L757.53 295.59 L759.49 295.20 L761.45 294.82 L763.42 294.45 L765.39 294.13 L767.37 293.87 L769.36 293.69 L771.35 293.55 L773.35 293.44 L775.34 293.33 L777.34 293.22 L779.34 293.12 L781.34 293.01 L783.34 292.90 L785.34 292.80 L787.33 292.69 L789.33 292.59 L791.33 292.49 L793.33 292.39 L795.33 292.32 L797.33 292.26 L799.33 292.22 L801.33 292.18 L803.33 292.14 L805.33 292.11 L807.33 292.07 L809.33 292.03 L811.33 292.00 L813.33 291.96 L815.33 291.92 L817.33 291.89 L819.33 291.85 L821.33 291.81 L823.33 291.78 L825.34 291.74 L827.34 291.71 L829.34 291.68 L831.34 291.65 L833.34 291.63 L835.34 291.60 L837.34 291.58 L839.34 291.55 L841.34 291.53 L843.34 291.51 L845.34 291.48 L847.34 291.46 L849.34 291.43 L851.35 291.41 L853.35 291.38 L855.35 291.36 L857.35 291.33 L859.35 291.31 L861.35 291.28 L863.35 291.25 L865.35 291.22 L867.35 291.19 L869.35 291.16 L871.35 291.13 L873.35 291.10 L875.35 291.07 L877.35 291.04 L879.36 291.02 L881.36 291.01 L883.36 291.00 L885.36 291.00 L887.36 291.00 L889.36 291.00 L891.36 291.00 L893.36 291.00 L895.36 291.00 L897.36 291.00 L899.36 291.00 L901.36 291.00 L903.37 291.00 L905.37 291.00 L907.37 291.00 L909.37 291.00 L911.37 291.00 L913.37 291.00 L915.37 291.00 L917.37 291.00 L919.37 291.00 L921.37 291.00 L923.38 291.00 L925.38 291.00 L927.38 291.00 L929.38 291.00 L931.38 291.00 L933.38 291.00 L935.38 291.00 L937.38 291.00 L939.38 291.00 L941.38 291.00 L943.38 291.00 L945.39 291.00 L947.39 291.00 L949.39 291.00 L951.39 291.00 L953.39 291.00 L955.39 291.00 L957.39 291.00 L959.39 291.00 L961.39 291.00 L963.39 291.00 L965.39 291.00 L967.40 291.00 L969.40 291.00 L971.40 291.00 L973.40 291.00 L975.40 291.00 L977.40 291.00 L979.40 291.00 L981.40 291.00 L983.40 291.00 L985.40 291.00 L987.40 291.00 L989.41 291.00 L991.41 291.00 L993.41 291.00 L995.41 291.00 L997.41 291.00 L999.41 291.00 L1001.41 291.00 L1003.41 291.00 L1005.41 291.00 L1007.41 291.00 L1009.41 291.00 L1011.42 291.00 L1013.42 291.00 L1015.42 291.00 L1017.42 291.00 L1019.42 291.00 L1021.42 291.00 L1023.42 291.00 L1025.42 291.00 L1027.42 291.00 L1029.42 291.00 L1031.42 291.00 L1033.43 291.00 L1035.43 291.00 L1037.43 291.00 L1039.43 291.00 L1041.43 291.00 L1043.43 291.00 L1045.43 291.00 L1047.43 291.00 L1049.43 291.00 L1051.43 291.00 L1053.43 291.00 L1055.44 291.00 L1057.44 291.00 L1059.44 291.00 L1061.44 291.00 L1063.44 291.00 L1065.44 291.00 L1067.44 291.00 L1069.44 291.00 L1071.44 291.00 L1073.44 291.00 L1075.44 291.00 L1077.45 291.00 L1079.45 291.00 L1081.45 291.00 L1083.45 291.00 L1085.45 291.00 L1087.45 291.00 L1089.45 291.00 L1091.45 291.00 L1093.45 291.00 L1095.45 291.00 L1097.45 291.00 L1099.46 291.00 L1101.46 291.00 L1103.46 291.00 L1105.46 291.00 L1107.46 291.00 L1109.46 291.00 L1111.46 291.00 L1113.46 291.00 L1115.46 291.00 L1117.46 291.00 L1119.46 291.00 L1121.47 291.00 L1123.47 291.00 L1125.47 291.00 L1127.47 291.00 L1129.47 291.00 L1131.47 291.00 L1133.47 291.00 L1135.47 291.00 L1137.47 291.00 L1139.47 291.00 L1141.47 291.00 L1143.48 291.00 L1145.48 291.00 L1147.48 291.00 L1149.48 291.00 L1151.48 291.00 L1153.48 291.00 L1155.48 291.00 L1157.48 291.00 L1159.48 291.00 L1161.48 291.00 L1163.48 291.00 L1165.49 291.00 L1167.49 291.00 L1169.49 291.00 L1171.49 291.00 L1173.49 291.00 L1175.49 291.00 L1177.49 291.00 L1179.49 291.00 L1181.49 291.00 L1183.49 291.00 L1185.49 291.00 L1187.50 291.00 L1189.50 291.00 L1191.50 291.00 L1193.50 291.00 L1195.50 291.00 L1197.00 291.00" stroke="#98b954" stroke-width="2" fill="none" stroke-linejoin="round"/>
<path d="M540.00 655.00 L540.95 653.24 L541.85 651.46 L542.64 649.64 L543.33 647.77 L543.96 645.87 L544.56 643.96 L545.12 642.04 L545.61 640.11 L546.02 638.15 L546.36 636.19 L546.67 634.21 L546.99 632.23 L547.30 630.26 L547.62 628.28 L547.95 626.31 L548.31 624.34 L548.68 622.38 L549.07 620.41 L549.46 618.45 L549.85 616.49 L550.24 614.53 L550.62 612.56 L550.98 610.59 L551.34 608.63 L551.68 606.65 L552.02 604.68 L552.35 602.71 L552.69 600.74 L553.02 598.76 L553.35 596.79 L553.66 594.81 L553.96 592.84 L554.26 590.86 L554.56 588.88 L554.86 586.90 L555.16 584.92 L555.47 582.95 L555.79 580.97 L556.12 579.00 L556.45 577.03 L556.79 575.05 L557.13 573.08 L557.46 571.11 L557.79 569.14 L558.10 567.16 L558.40 565.18 L558.69 563.20 L558.97 561.22 L559.25 559.24 L559.54 557.26 L559.82 555.28 L560.12 553.30 L560.42 551.32 L560.73 549.34 L561.04 547.37 L561.36 545.39 L561.67 543.42 L561.98 541.44 L562.30 539.46 L562.61 537.49 L562.93 535.51 L563.25 533.54 L563.60 531.57 L564.02 529.62 L564.52 527.69 L565.08 525.76 L565.65 523.85 L566.22 521.93 L566.78 520.01 L567.34 518.09 L567.90 516.17 L568.45 514.24 L569.01 512.32 L569.58 510.41 L570.15 508.49 L570.73 506.57 L571.33 504.67 L571.97 502.78 L572.70 500.92 L573.53 499.10 L574.40 497.31 L575.29 495.52 L576.20 493.74 L577.15 491.98 L578.17 490.26 L579.26 488.59 L580.38 486.93 L581.52 485.28 L582.65 483.64 L583.79 481.99 L584.94 480.35 L586.11 478.73 L587.34 477.17 L588.65 475.66 L590.02 474.20 L591.41 472.76 L592.80 471.33 L594.19 469.89 L595.59 468.47 L597.01 467.05 L598.44 465.66 L599.89 464.27 L601.34 462.90 L602.80 461.52 L604.25 460.15 L605.70 458.77 L607.15 457.39 L608.59 456.00 L610.03 454.61 L611.47 453.22 L612.89 451.81 L614.26 450.37 L615.59 448.87 L616.87 447.34 L618.14 445.79 L619.41 444.25 L620.68 442.70 L621.94 441.15 L623.21 439.60 L624.47 438.05 L625.73 436.49 L626.99 434.93 L628.24 433.37 L629.49 431.81 L630.74 430.25 L631.99 428.69 L633.24 427.12 L634.49 425.56 L635.72 423.99 L636.93 422.39 L638.09 420.77 L639.22 419.11 L640.33 417.45 L641.44 415.79 L642.55 414.12 L643.66 412.46 L644.77 410.79 L645.89 409.13 L647.01 407.48 L648.16 405.84 L649.32 404.21 L650.50 402.59 L651.67 400.97 L652.84 399.35 L654.02 397.73 L655.19 396.11 L656.36 394.49 L657.53 392.86 L658.69 391.24 L659.86 389.61 L661.02 387.98 L662.18 386.35 L663.33 384.71 L664.45 383.05 L665.53 381.37 L666.59 379.68 L667.64 377.98 L668.69 376.27 L669.74 374.57 L670.78 372.86 L671.80 371.14 L672.76 369.39 L673.66 367.60 L674.50 365.79 L675.33 363.98 L676.21 362.20 L677.23 360.51 L678.43 358.96 L679.80 357.52 L681.22 356.13 L682.64 354.73 L684.03 353.28 L685.37 351.80 L686.70 350.31 L688.03 348.81 L689.35 347.31 L690.67 345.81 L692.00 344.31 L693.33 342.82 L694.70 341.37 L696.14 340.00 L697.68 338.74 L699.28 337.55 L700.91 336.39 L702.54 335.23 L704.17 334.06 L705.77 332.86 L707.33 331.62 L708.86 330.34 L710.38 329.03 L711.89 327.73 L713.44 326.46 L715.04 325.30 L716.75 324.29 L718.52 323.38 L720.33 322.53 L722.14 321.68 L723.96 320.84 L725.77 320.00 L727.59 319.16 L729.41 318.33 L731.23 317.50 L733.05 316.68 L734.88 315.86 L736.70 315.03 L738.53 314.21 L740.35 313.40 L742.18 312.59 L744.03 311.84 L745.91 311.19 L747.83 310.63 L749.76 310.13 L751.71 309.65 L753.65 309.17 L755.59 308.69 L757.53 308.21 L759.48 307.73 L761.42 307.25 L763.36 306.78 L765.31 306.32 L767.26 305.89 L769.22 305.49 L771.19 305.10 L773.15 304.73 L775.12 304.35 L777.08 303.97 L779.05 303.60 L781.01 303.22 L782.98 302.85 L784.94 302.47 L786.91 302.09 L788.87 301.72 L790.84 301.34 L792.80 300.98 L794.78 300.64 L796.75 300.34 L798.73 300.06 L800.72 299.79 L802.70 299.52 L804.68 299.25 L806.66 298.98 L808.65 298.71 L810.63 298.45 L812.61 298.18 L814.59 297.91 L816.58 297.64 L818.56 297.38 L820.54 297.12 L822.53 296.87 L824.52 296.66 L826.51 296.46 L828.50 296.28 L830.49 296.10 L832.49 295.91 L834.48 295.73 L836.47 295.55 L838.46 295.37 L840.46 295.18 L842.45 295.00 L844.44 294.82 L846.43 294.64 L848.43 294.48 L850.42 294.34 L852.42 294.22 L854.42 294.11 L856.42 294.00 L858.41 293.90 L860.41 293.79 L862.41 293.68 L864.41 293.58 L866.41 293.47 L868.40 293.37 L870.40 293.26 L872.40 293.15 L874.40 293.05 L876.40 292.94 L878.39 292.83 L880.39 292.73 L882.39 292.62 L884.39 292.52 L886.39 292.44 L888.39 292.37 L890.39 292.32 L892.39 292.27 L894.39 292.23 L896.39 292.19 L898.39 292.15 L900.39 292.10 L902.39 292.06 L904.39 292.02 L906.39 291.98 L908.39 291.93 L910.39 291.89 L912.39 291.85 L914.39 291.80 L916.39 291.76 L918.39 291.72 L920.39 291.68 L922.39 291.64 L924.39 291.60 L926.39 291.58 L928.39 291.55 L930.40 291.53 L932.40 291.51 L934.40 291.48 L936.40 291.46 L938.40 291.44 L940.40 291.42 L942.40 291.40 L944.40 291.37 L946.40 291.35 L948.40 291.33 L950.40 291.31 L952.40 291.28 L954.40 291.26 L956.40 291.24 L958.40 291.22 L960.41 291.20 L962.41 291.18 L964.41 291.16 L966.41 291.14 L968.41 291.12 L970.41 291.10 L972.41 291.08 L974.41 291.06 L976.41 291.04 L978.41 291.02 L980.41 291.01 L982.41 291.00 L984.41 291.00 L986.41 291.00 L988.42 291.00 L990.42 291.00 L992.42 291.00 L994.42 291.00 L996.42 291.00 L998.42 291.00 L1000.42 291.00 L1002.42 291.00 L1004.42 291.00 L1006.42 291.00 L1008.42 291.00 L1010.42 291.00 L1012.43 291.00 L1014.43 291.00 L1016.43 291.00 L1018.43 291.00 L1020.43 291.00 L1022.43 291.00 L1024.43 291.00 L1026.43 291.00 L1028.43 291.00 L1030.43 291.00 L1032.43 291.00 L1034.43 291.00 L1036.44 291.00 L1038.44 291.00 L1040.44 291.00 L1042.44 291.00 L1044.44 291.00 L1046.44 291.00 L1048.44 291.00 L1050.44 291.00 L1052.44 291.00 L1054.44 291.00 L1056.44 291.00 L1058.44 291.00 L1060.44 291.00 L1062.45 291.00 L1064.45 291.00 L1066.45 291.00 L1068.45 291.00 L1070.45 291.00 L1072.45 291.00 L1074.45 291.00 L1076.45 291.00 L1078.45 291.00 L1080.45 291.00 L1082.45 291.00 L1084.45 291.00 L1086.46 291.00 L1088.46 291.00 L1090.46 291.00 L1092.46 291.00 L1094.46 291.00 L1096.46 291.00 L1098.46 291.00 L1100.46 291.00 L1102.46 291.00 L1104.46 291.00 L1106.46 291.00 L1108.46 291.00 L1110.47 291.00 L1112.47 291.00 L1114.47 291.00 L1116.47 291.00 L1118.47 291.00 L1120.47 291.00 L1122.47 291.00 L1124.47 291.00 L1126.47 291.00 L1128.47 291.00 L1130.47 291.00 L1132.47 291.00 L1134.47 291.00 L1136.48 291.00 L1138.48 291.00 L1140.48 291.00 L1142.48 291.00 L1144.48 291.00 L1146.48 291.00 L1148.48 291.00 L1150.48 291.00 L1152.48 291.00 L1154.48 291.00 L1156.48 291.00 L1158.48 291.00 L1160.49 291.00 L1162.49 291.00 L1164.49 291.00 L1166.49 291.00 L1168.49 291.00 L1170.49 291.00 L1172.49 291.00 L1174.49 291.00 L1176.49 291.00 L1178.49 291.00 L1180.49 291.00 L1182.49 291.00 L1184.49 291.00 L1186.50 291.00 L1188.50 291.00 L1190.50 291.00 L1192.50 291.00 L1194.50 291.00 L1196.50 291.00 L1197.00 291.00" stroke="#7d60a0" stroke-width="2" fill="none" stroke-linejoin="round"/>
<path d="M540.00 655.00 L540.40 653.04 L540.81 651.08 L541.21 649.12 L541.61 647.16 L542.01 645.19 L542.39 643.23 L542.73 641.26 L543.01 639.28 L543.23 637.29 L543.41 635.30 L543.58 633.31 L543.75 631.31 L543.91 629.32 L544.08 627.32 L544.26 625.33 L544.44 623.33 L544.63 621.34 L544.82 619.35 L545.01 617.36 L545.20 615.36 L545.38 613.37 L545.56 611.38 L545.73 609.38 L545.88 607.38 L546.04 605.39 L546.19 603.39 L546.34 601.40 L546.50 599.40 L546.67 597.41 L546.86 595.41 L547.06 593.42 L547.27 591.43 L547.49 589.44 L547.71 587.45 L547.93 585.46 L548.15 583.47 L548.36 581.48 L548.55 579.49 L548.72 577.50 L548.87 575.50 L549.00 573.50 L549.12 571.50 L549.24 569.51 L549.36 567.51 L549.48 565.51 L549.60 563.51 L549.72 561.51 L549.84 559.51 L549.96 557.52 L550.08 555.52 L550.20 553.52 L550.31 551.52 L550.42 549.52 L550.52 547.52 L550.62 545.52 L550.72 543.52 L550.82 541.52 L550.92 539.52 L551.02 537.52 L551.12 535.52 L551.22 533.52 L551.32 531.53 L551.42 529.53 L551.52 527.53 L551.62 525.53 L551.72 523.53 L551.83 521.53 L551.93 519.53 L552.04 517.53 L552.15 515.53 L552.26 513.53 L552.37 511.53 L552.48 509.53 L552.59 507.54 L552.70 505.54 L552.81 503.54 L552.92 501.54 L553.03 499.54 L553.14 497.54 L553.25 495.54 L553.36 493.54 L553.47 491.54 L553.58 489.55 L553.69 487.55 L553.80 485.55 L553.91 483.55 L554.02 481.55 L554.13 479.55 L554.25 477.55 L554.38 475.55 L554.50 473.56 L554.63 471.56 L554.76 469.56 L554.89 467.56 L555.02 465.57 L555.15 463.57 L555.28 461.57 L555.41 459.57 L555.54 457.57 L555.67 455.58 L555.80 453.58 L555.93 451.58 L556.06 449.58 L556.19 447.59 L556.32 445.59 L556.45 443.59 L556.58 441.59 L556.71 439.59 L556.84 437.60 L556.96 435.60 L557.08 433.60 L557.19 431.60 L557.31 429.60 L557.42 427.60 L557.53 425.61 L557.65 423.61 L557.76 421.61 L557.88 419.61 L557.99 417.61 L558.11 415.61 L558.22 413.61 L558.34 411.61 L558.45 409.62 L558.56 407.62 L558.68 405.62 L558.80 403.62 L558.92 401.62 L559.04 399.62 L559.18 397.63 L559.32 395.63 L559.47 393.63 L559.61 391.64 L559.76 389.64 L559.91 387.64 L560.05 385.65 L560.20 383.65 L560.35 381.65 L560.49 379.66 L560.64 377.66 L560.79 375.66 L560.93 373.67 L561.08 371.67 L561.23 369.67 L561.37 367.68 L561.53 365.68 L561.69 363.69 L561.87 361.69 L562.06 359.70 L562.25 357.71 L562.45 355.72 L562.65 353.72 L562.85 351.73 L563.05 349.74 L563.25 347.75 L563.45 345.76 L563.66 343.77 L563.88 341.78 L564.13 339.79 L564.42 337.81 L564.74 335.84 L565.09 333.87 L565.45 331.90 L565.80 329.93 L566.16 327.96 L566.53 325.99 L566.91 324.02 L567.32 322.07 L567.78 320.12 L568.28 318.18 L568.81 316.26 L569.38 314.34 L569.98 312.43 L570.62 310.53 L571.26 308.64 L571.92 306.75 L572.59 304.86 L573.29 303.00 L574.09 301.19 L575.06 299.49 L576.22 297.92 L577.56 296.49 L579.05 295.21 L580.67 294.09 L582.40 293.15 L584.20 292.41 L586.09 291.90 L588.03 291.62 L590.01 291.48 L592.00 291.40 L592.00 291.40" stroke="#46aac5" stroke-width="2" fill="none" stroke-linejoin="round"/>
<path d="M588 291.5H1197" stroke="#46aac5" stroke-width="1.2" fill="none"/>
<path d="M534.00 655.50 L535.98 655.40 L537.92 655.21 L539.74 654.79 L541.36 653.99 L542.72 652.78 L543.82 651.26 L544.69 649.52 L545.41 647.68 L546.06 645.79 L546.70 643.90 L547.33 642.00 L547.97 640.10 L548.60 638.21 L549.23 636.31 L549.86 634.41 L550.50 632.52 L551.14 630.62 L551.78 628.73 L552.43 626.83 L553.08 624.94 L553.73 623.05 L554.37 621.16 L555.01 619.26 L555.63 617.36 L556.23 615.45 L556.81 613.54 L557.39 611.62 L557.97 609.71 L558.55 607.80 L559.13 605.88 L559.70 603.96 L560.27 602.05 L560.83 600.13 L561.39 598.21 L561.95 596.29 L562.51 594.37 L563.08 592.45 L563.64 590.53 L564.21 588.61 L564.79 586.70 L565.40 584.79 L566.05 582.91 L566.77 581.05 L567.55 579.20 L568.35 577.37 L569.16 575.55 L569.98 573.72 L570.81 571.90 L571.65 570.09 L572.53 568.30 L573.47 566.54 L574.49 564.82 L575.55 563.13 L576.64 561.46 L577.74 559.79 L578.84 558.11 L579.95 556.45 L581.07 554.79 L582.22 553.16 L583.40 551.55 L584.61 549.96 L585.84 548.38 L587.06 546.80 L588.29 545.22 L589.52 543.64 L590.75 542.06 L591.97 540.48 L593.17 538.88 L594.32 537.25 L595.40 535.58 L596.41 533.86 L597.38 532.11 L598.33 530.35 L599.27 528.58 L600.21 526.82 L601.15 525.05 L602.09 523.29 L603.03 521.52 L603.97 519.76 L604.91 517.99 L605.85 516.23 L606.78 514.46 L607.70 512.68 L608.60 510.89 L609.48 509.10 L610.35 507.30 L611.22 505.50 L612.08 503.69 L612.95 501.89 L613.81 500.08 L614.67 498.28 L615.52 496.47 L616.35 494.65 L617.17 492.82 L617.97 490.99 L618.76 489.16 L619.57 487.32 L620.39 485.50 L621.26 483.71 L622.18 481.94 L623.15 480.19 L624.15 478.46 L625.15 476.72 L626.14 474.99 L627.11 473.24 L628.06 471.48 L628.99 469.71 L629.90 467.93 L630.81 466.15 L631.72 464.37 L632.62 462.58 L633.50 460.78 L634.36 458.98 L635.21 457.17 L636.05 455.35 L636.89 453.54 L637.72 451.72 L638.55 449.90 L639.36 448.07 L640.15 446.23 L640.93 444.39 L641.69 442.54 L642.46 440.69 L643.21 438.84 L643.95 436.98 L644.66 435.12 L645.35 433.24 L646.02 431.35 L646.68 429.47 L647.35 427.58 L648.01 425.69 L648.69 423.81 L649.41 421.95 L650.16 420.10 L650.94 418.26 L651.75 416.43 L652.56 414.60 L653.37 412.77 L654.19 410.94 L655.00 409.12 L655.82 407.29 L656.64 405.47 L657.47 403.65 L658.32 401.84 L659.20 400.04 L660.09 398.25 L660.98 396.46 L661.88 394.67 L662.78 392.89 L663.68 391.10 L664.57 389.31 L665.47 387.53 L666.37 385.74 L667.28 383.95 L668.19 382.18 L669.12 380.41 L670.07 378.64 L671.03 376.89 L671.99 375.13 L672.95 373.38 L673.91 371.63 L674.88 369.87 L675.84 368.12 L676.80 366.37 L677.76 364.61 L678.71 362.86 L679.65 361.09 L680.56 359.31 L681.45 357.53 L682.39 355.77 L683.41 354.07 L684.56 352.45 L685.79 350.89 L687.07 349.36 L688.37 347.84 L689.68 346.33 L690.98 344.81 L692.29 343.30 L693.62 341.81 L694.99 340.37 L696.44 339.02 L697.98 337.75 L699.57 336.55 L701.19 335.39 L702.82 334.22 L704.44 333.05 L706.03 331.84 L707.60 330.60 L709.14 329.33 L710.66 328.04 L712.20 326.76 L713.77 325.54 L715.40 324.41 L717.10 323.39 L718.86 322.45 L720.65 321.56 L722.45 320.68 L724.25 319.81 L726.05 318.94 L727.85 318.08 L729.66 317.23 L731.48 316.39 L733.30 315.57 L735.12 314.74 L736.95 313.92 L738.77 313.10 L740.60 312.29 L742.44 311.51 L744.29 310.78 L746.18 310.15 L748.09 309.59 L750.03 309.09 L751.97 308.62 L753.91 308.14 L755.86 307.67 L757.80 307.20 L759.75 306.73 L761.69 306.27 L763.64 305.81 L765.59 305.37 L767.54 304.95 L769.51 304.57 L771.47 304.20 L773.44 303.85 L775.41 303.49 L777.38 303.13 L779.35 302.78 L781.31 302.42 L783.28 302.07 L785.25 301.71 L787.22 301.35 L789.19 301.00 L791.16 300.65 L793.13 300.31 L795.10 299.99 L797.08 299.69 L799.06 299.41 L801.04 299.14 L803.02 298.87 L805.00 298.61 L806.99 298.34 L808.97 298.07 L810.95 297.80 L812.93 297.53 L814.92 297.27 L816.90 297.00 L818.88 296.74 L820.86 296.48 L822.85 296.25 L824.84 296.03 L826.83 295.84 L828.82 295.65 L830.81 295.47 L832.80 295.28 L834.80 295.10 L836.79 294.92 L838.78 294.74 L840.77 294.55 L842.76 294.37 L844.75 294.19 L846.75 294.02 L848.74 293.87 L850.74 293.74 L852.73 293.63 L854.73 293.53 L856.73 293.43 L858.73 293.33 L860.72 293.24 L862.72 293.14 L864.72 293.05 L866.72 292.95 L868.72 292.85 L870.71 292.76 L872.71 292.66 L874.71 292.57 L876.71 292.47 L878.71 292.37 L880.70 292.28 L882.70 292.19 L884.70 292.10 L886.70 292.03 L888.70 291.97 L890.70 291.92 L892.70 291.88 L894.70 291.85 L896.70 291.81 L898.70 291.77 L900.70 291.74 L902.70 291.70 L904.70 291.66 L906.70 291.62 L908.70 291.59 L910.70 291.55 L912.69 291.51 L914.69 291.47 L916.69 291.44 L918.69 291.40 L920.69 291.36 L922.69 291.33 L924.69 291.31 L926.69 291.29 L928.69 291.27 L930.69 291.26 L932.69 291.24 L934.69 291.23 L936.69 291.22 L938.69 291.20 L940.70 291.19 L942.70 291.18 L944.70 291.16 L946.70 291.15 L948.70 291.14 L950.70 291.12 L952.70 291.11 L954.70 291.10 L956.70 291.08 L958.70 291.07 L960.70 291.06 L962.70 291.04 L964.70 291.03 L966.70 291.02 L968.70 291.01 L970.70 291.00 L972.70 291.00 L974.70 291.00 L976.70 291.00 L978.70 291.00 L980.70 291.00 L982.70 291.00 L984.70 291.00 L986.70 291.00 L988.70 291.00 L990.70 291.00 L992.70 291.00 L994.70 291.00 L996.70 291.00 L998.70 291.00 L1000.70 291.00 L1002.70 291.00 L1002.70 291.00" stroke="#ff0000" stroke-width="3.3" fill="none" stroke-linejoin="round"/>
<circle cx="548.5" cy="619.2" r="5" fill="#800000" stroke="#1a0000" stroke-width="1"/>
<circle cx="577.8" cy="564.5" r="5" fill="#800000" stroke="#1a0000" stroke-width="1"/>
<circle cx="626.5" cy="473.2" r="5" fill="#800000" stroke="#1a0000" stroke-width="1"/>
<circle cx="675.3" cy="381.9" r="5" fill="#800000" stroke="#1a0000" stroke-width="1"/>
<circle cx="704.6" cy="327.2" r="5" fill="#800000" stroke="#1a0000" stroke-width="1"/>
</svg>
<div class="t" style="right:760px;top:649px;font-size:11px;line-height:13px">0.00</div>
<div class="t" style="right:760px;top:576px;font-size:11px;line-height:13px">20.00</div>
<div class="t" style="right:760px;top:503px;font-size:11px;line-height:13px">40.00</div>
<div class="t" style="right:760px;top:430px;font-size:11px;line-height:13px">60.00</div>
<div class="t" style="right:760px;top:357px;font-size:11px;line-height:13px">80.00</div>
<div class="t" style="right:760px;top:284px;font-size:11px;line-height:13px">100.00</div>
<div class="t" style="left:429.0px;width:200px;text-align:center;top:661px;font-size:11px;line-height:13px">0.00</div>
<div class="t" style="left:607.0px;width:200px;text-align:center;top:661px;font-size:11px;line-height:13px">10.00</div>
<div class="t" style="left:785.0px;width:200px;text-align:center;top:661px;font-size:11px;line-height:13px">20.00</div>
<div class="t" style="left:963.0px;width:200px;text-align:center;top:661px;font-size:11px;line-height:13px">30.00</div>
<div class="t" style="left:692.0px;width:300px;text-align:center;top:250px;font-size:16px;font-weight:bold;line-height:18px">PSD (d^0.5)</div>
<div class="t" style="left:713.0px;width:300px;text-align:center;top:682px;font-size:12px;font-weight:bold;letter-spacing:0.45px">d^0.5 - &micro;m^0.5</div>
<div class="t" style="left:400px;top:465px;width:120px;text-align:center;font-size:12px;font-weight:bold;letter-spacing:-0.3px;transform:translate(-0px,0) rotate(-90deg);transform-origin:60px 7px;left:400px">Cum. vol (%)</div>
<div class="a" style="left:1070px;top:547px;width:9px;height:3px;background:#000"></div>
<div class="a" style="left:1082px;top:547px;width:9px;height:3px;background:#000"></div>
<div class="t" style="left:1097px;top:541.5px;font-size:11px;line-height:13px">Target</div>
<div class="a" style="left:1070px;top:561.0px;width:22px;height:2px;background:#4a7ebb"></div>
<div class="t" style="left:1097px;top:556px;font-size:11px;line-height:13px">Largest</div>
<div class="a" style="left:1070px;top:575.0px;width:22px;height:2px;background:#98b954"></div>
<div class="t" style="left:1097px;top:570px;font-size:11px;line-height:13px">No small size</div>
<div class="a" style="left:1070px;top:589.0px;width:22px;height:2px;background:#7d60a0"></div>
<div class="t" style="left:1097px;top:584px;font-size:11px;line-height:13px">Wide and Big</div>
<div class="a" style="left:1070px;top:609.0px;width:22px;height:2px;background:#46aac5"></div>
<div class="t" style="left:1097px;top:597px;font-size:11px;line-height:13px;line-height:12px">Small and<br>concentrate</div>
<div class="a" style="left:1070px;top:628.5px;width:22px;height:4px;background:#ff0000"></div>
<div class="t" style="left:1097px;top:624.5px;font-size:11px;line-height:13px">Blend</div>
</body></html>
